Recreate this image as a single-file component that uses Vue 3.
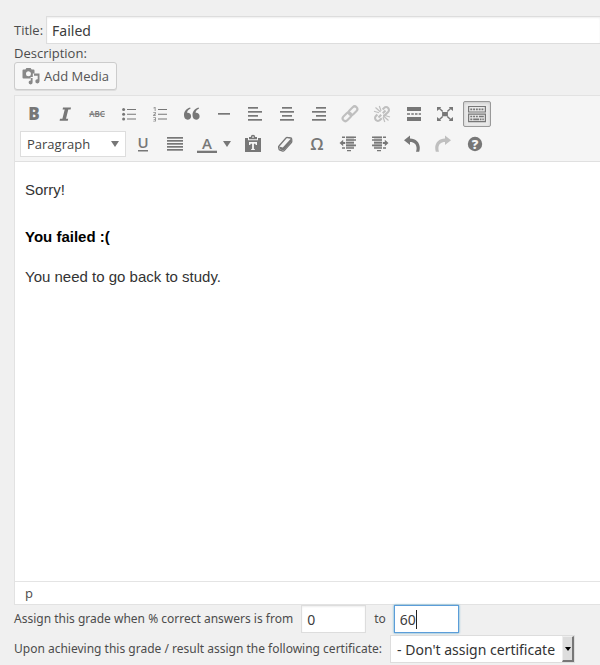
<script setup>
import { ref } from 'vue'

const title = ref('Failed')
const from = ref('0')
const to = ref('60')
const format = ref('Paragraph')
const certificate = ref('none')

const lines = (rows) =>
  rows.map(([x, y, w]) => `<rect x="${x}" y="${y}" width="${w}" height="1.7"/>`).join('')

const glyph = (text, size, y, extra = '') =>
  `<text x="10" y="${y}" text-anchor="middle" font-family="Open Sans, sans-serif" font-size="${size}" ${extra}>${text}</text>`

const indentIcon =
  '<path d="M4 2.600h3v1.500H4zM8 2.600h10v1.500H8zM8 5.200h10v1.600H8zM8 7.900h8v1.600H8zM8 10.600h10v1.600H8zM4 13.300h3v1.500H4zM8 13.300h8v1.500H8zM9 15.900h4v1.300H9z"/><path d="M8 2.600h8v11H8z" opacity=".35"/><path d="m1.500 9 3.700-3.200v2.300h2v1.900h-2v2.300z"/>'

const firstRow = [
  { name: 'Bold', svg: glyph('B', 17, 16, 'font-weight="800"') },
  { name: 'Italic', svg: '<path d="M8 3.500h8l-.4 2h-2.300l-2.300 9.200h2.200l-.4 2H4.600l.4-2h2.400l2.300-9.200H7.600z"/>' },
  { name: 'Strikethrough', svg: glyph('ABC', 8, 13, 'font-weight="600"') + '<path d="M2 9.600h16v1H2z"/>' },
  {
    name: 'Bulleted list',
    svg: '<circle cx="4.600" cy="5.400" r="1.500"/><circle cx="4.600" cy="10.200" r="1.500"/><circle cx="4.600" cy="15" r="1.500"/><path d="M8 5h9v1H8zM8 9.800h9v1H8zM8 14.600h9v1H8z"/>'
  },
  {
    name: 'Numbered list',
    svg: '<path d="M3.500 3.600 5 2.900h.6v4h-.9V4.200l-1.200.4zM3.200 8h2.600v2.200l-1.400 1h1.500v.8H3.100v-.9l1.800-1.500v-.8H3.200zM3.200 13.200h2.700v4.200H3.200v-.7H5v-1H3.700V15H5v-1H3.200z" opacity=".8"/><path d="M8 5h9v1H8zM8 9.800h9v1H8zM8 14.600h9v1H8z"/>'
  },
  {
    name: 'Blockquote',
    svg: '<path d="M8.600 4.600C6 5.800 5.200 7.300 5.100 8.900c2.200-.3 4 1 4 3.300 0 2-1.500 3.500-3.500 3.500-2.200 0-3.600-1.700-3.600-4.400 0-3.700 2-6.600 6.100-7.700zM17.100 4.600c-2.600 1.200-3.400 2.700-3.500 4.300 2.200-.3 4 1 4 3.300 0 2-1.500 3.500-3.500 3.500-2.200 0-3.600-1.700-3.600-4.400 0-3.700 2-6.600 6.100-7.700z"/>'
  },
  { name: 'Horizontal line', svg: '<path d="M4 9h12v1.700H4z"/>' },
  { name: 'Align left', svg: lines([[3, 3, 10], [3, 7, 14], [3, 11, 10], [3, 15, 14]]) },
  { name: 'Align center', svg: lines([[5, 3, 10], [3, 7, 14], [5, 11, 10], [3, 15, 14]]) },
  { name: 'Align right', svg: lines([[7, 3, 10], [3, 7, 14], [7, 11, 10], [3, 15, 14]]) },
  {
    name: 'Insert link',
    dim: true,
    svg: '<g fill="none" stroke="currentColor" stroke-width="2.100"><rect x="-5" y="-2.700" width="10" height="5.400" rx="2.700" transform="translate(13 6.700) rotate(-45)"/><rect x="-5" y="-2.700" width="10" height="5.400" rx="2.700" transform="translate(7 12.800) rotate(-45)"/></g>'
  },
  {
    name: 'Remove link',
    dim: true,
    svg: '<g fill="none" stroke="currentColor" stroke-width="2.100"><path d="m10.600 5.400 1.500-1.500a2.800 2.800 0 0 1 4 0 2.800 2.800 0 0 1 0 4L13 11a2.800 2.800 0 0 1-2 .8M10.800 9.200l2.700-2.700M5.400 10.600 3.900 12.100a2.800 2.800 0 0 0 0 4 2.800 2.800 0 0 0 4 0L9.800 14.200M9.200 10.800l-2.700 2.700"/></g><path d="M3.500 3.500 8.500 8M7.300 2l1.800 5M2 7.300l5 1.500M11.500 12l5 4.500M11 13l1.800 5M13 11.500l5 1.500" stroke="currentColor" stroke-width="1.200"/>'
  },
  { name: 'Insert Read More tag', svg: '<path d="M3 3h14v4H3zM3 9.200h3v1.600H3zM7.300 9.200h2.500v1.600H7.300zM11 9.200h2.500v1.600H11zM14.700 9.200H17v1.600h-2.300zM3 13h14v4H3z"/>' },
  {
    name: 'Fullscreen',
    svg: '<path d="M7.100 8h5.800v4.200H7.100zM2 3h4.200L5.200 4.200l3 2.800-1 1-3-2.800L2 7zM18 3h-4.200l1 1.200-3 2.800 1 1 3-2.800L18 7zM2 17h4.200l-1-1.200 3-2.800-1-1-3 2.800L2 13zM18 17h-4.200l1-1.200-3-2.800 1-1 3 2.800L18 13z"/>'
  },
  {
    name: 'Toolbar toggle',
    active: true,
    svg: '<path fill-rule="evenodd" d="M1 2h18v6.600H1zm1.200 1.100v4.400h15.600V3.100zM1 9.600h18v8.600H1zm1.200 1.100v6.400h15.600v-6.400z"/><g stroke="currentColor" stroke-width="1.700"><path d="M3.300 5.300h13.500" stroke-dasharray="1.900 .9"/><path d="M3.300 12.500h8.500" stroke-dasharray="1.900 .9"/><path d="M12 12.500h4.800M3.300 15.300h2M6.200 15.300h6M13 15.300h1.500M15.300 15.300h1.500"/></g>'
  }
]

const secondRow = [
  { name: 'Underline', svg: glyph('U', 15, 14, 'font-weight="600"') + '<path d="M5 16h10v1.500H5z"/>' },
  { name: 'Justify', svg: lines([[2, 3, 16], [2, 6, 16], [2, 9, 16], [2, 12, 16], [2, 15, 16]]) },
  {
    name: 'Text color',
    split: true,
    svg: glyph('A', 15, 15, 'font-weight="600"') + '<path d="M0 16.700h20v2.300H0z"/>'
  },
  {
    name: 'Paste as text',
    svg: '<path fill-rule="evenodd" d="M2 4h3v2.300h10V4h3v14H2zm4 4v3h1.200l.5-1.300h1.400v5.100l-1 .4v.8h3.800v-.8l-1-.4V9.700h1.400l.5 1.300H14V8z"/><path d="M6 5.300V3h1.800a2.200 2.200 0 0 1 4.400 0H14v2.300z"/><path d="M9.200 2.600h1.600v1.200H9.200z" fill="#f5f5f5"/>'
  },
  {
    name: 'Clear formatting',
    svg: '<path d="m4 12 7-8c.4-.4.9-.6 1.400-.5l3.300.5c.6.1 1 .6 1 1.200l.1 2.300c0 .4-.1.800-.4 1.100l-7.200 8c-.4.400-.9.600-1.400.500l-2.900-.9c-.5-.1-.8-.5-.9-1l-.4-2c-.1-.4.1-.9.400-1.200z" fill="none" stroke="currentColor" stroke-width="1.300"/><path d="m4 12.400 3.800 1.100 8-8.700.7 2.900-7.700 8.900-3.600-1z"/>'
  },
  { name: 'Special character', svg: glyph('Ω', 17, 16, 'font-weight="600"') },
  { name: 'Decrease indent', svg: indentIcon },
  { name: 'Increase indent', svg: `<g transform="matrix(-1 0 0 1 20 0)">${indentIcon}</g>` },
  {
    name: 'Undo',
    svg: '<path d="M2 6.200 8 1.500v2.900c5.800 0 9.800 4.100 9.800 9.400 0 1.400-.2 2.700-.6 3.900h-3.200c.4-1.100.6-2.200.6-3.400 0-4-2.500-6.300-6.600-6.300v3z"/>'
  },
  {
    name: 'Redo',
    dim: true,
    svg: '<path d="M18 6.200 12 1.500v2.900c-5.800 0-9.800 4.100-9.800 9.400 0 1.400.2 2.700.6 3.900H6c-.4-1.100-.6-2.200-.6-3.400 0-4 2.500-6.300 6.600-6.300v3z"/>'
  },
  {
    name: 'Keyboard shortcuts',
    svg: '<circle cx="10" cy="10" r="7.200"/><text x="10" y="14.600" text-anchor="middle" font-family="Open Sans, sans-serif" font-size="13" font-weight="800" fill="#f5f5f5">?</text>'
  }
]
</script>

<template>
  <form class="grade" @submit.prevent>
    <div class="title-row">
      <label for="title">Title:</label>
      <input id="title" v-model="title" class="field title-input" type="text" />
    </div>

    <div id="description-label" class="description">Description:</div>
    <button class="media" type="button">
      <svg class="media-icon" viewBox="0 0 18 18" aria-hidden="true">
        <path
          fill-rule="evenodd"
          d="M1.400 2.500h2L4.400 1h4.200l1 1.500h2c.5 0 .9.400.9.900V6.500h-1.700v3.500H8.600v1.500H1.400c-.5 0-.9-.4-.9-.9V3.400c0-.5.400-.9.900-.9zM6.500 4.300a2.500 2.500 0 1 0 0 5 2.500 2.500 0 0 0 0-5z"
        />
        <path d="M12 6.500h5.500v7.800a2.100 2.100 0 1 1-1.800-2.100V8.800H12zM8.800 11h1.800v4.200a2 2 0 1 1-1.800-1.800z" />
      </svg>
      <span>Add Media</span>
    </button>

    <section class="editor">
      <div class="toolbar" role="toolbar" aria-label="Formatting">
        <div class="tools tools-first">
          <button
            v-for="tool in firstRow"
            :key="tool.name"
            type="button"
            class="tool"
            :class="{ dim: tool.dim, active: tool.active }"
            :aria-label="tool.name"
          >
            <svg class="icon" viewBox="0 0 20 20" v-html="tool.svg"></svg>
          </button>
        </div>
        <div class="tools tools-second">
          <div class="format">
            <select v-model="format" class="format-select" aria-label="Format">
              <option>Paragraph</option>
              <option>Heading 1</option>
              <option>Heading 2</option>
            </select>
          </div>
          <button
            v-for="tool in secondRow"
            :key="tool.name"
            type="button"
            class="tool"
            :class="{ dim: tool.dim, split: tool.split }"
            :aria-label="tool.name"
          >
            <svg class="icon" viewBox="0 0 20 20" v-html="tool.svg"></svg>
          </button>
        </div>
      </div>

      <div class="content" contenteditable="true" role="textbox" aria-multiline="true" aria-labelledby="description-label">
        <p>Sorry!</p>
        <h4>You failed :(</h4>
        <p>You need to go back to study.</p>
      </div>
      <div class="status">p</div>
    </section>

    <div class="range-row">
      <label for="from">Assign this grade when % correct answers is from</label>
      <input id="from" v-model="from" class="field number" type="text" />
      <label for="to">to</label>
      <span class="focused">
        <input id="to" v-model="to" class="field number" type="text" />
      </span>
    </div>

    <div class="certificate-row">
      <label for="certificate">Upon achieving this grade / result assign the following certificate:</label>
      <span class="certificate">
        <select id="certificate" v-model="certificate" class="certificate-select">
          <option value="none">- Don't assign certificate</option>
        </select>
      </span>
    </div>
  </form>
</template>

<style>
body {
  background: #f0f0f0;
  overflow-x: hidden;
}
</style>

<style scoped>
.grade {
  padding: 16px 0 0 14px;
  font-family: 'Open Sans', sans-serif;
  font-size: 13px;
  line-height: 18px;
  color: #4c4c4c;
}

.title-row,
.range-row,
.certificate-row {
  display: flex;
  align-items: center;
  white-space: nowrap;
}

.title-row {
  gap: 3px;
}

.range-row,
.certificate-row {
  gap: 8px;
  font-family: 'Noto Sans', 'Open Sans', sans-serif;
  font-size: 12px;
  line-height: 20px;
}

.field {
  box-sizing: border-box;
  height: 28px;
  margin: 0;
  padding: 0 5px;
  border: 1px solid #ddd;
  background: #fff;
  box-shadow: inset 0 1px 2px rgba(0, 0, 0, 0.07);
  color: #3c3c3c;
  font-family: 'Noto Sans', 'Open Sans', sans-serif;
  font-size: 14px;
}

.title-input {
  flex: 1;
  min-width: 0;
  border-right: 0;
}

.description {
  height: 18px;
}

.media {
  display: flex;
  align-items: center;
  gap: 4px;
  box-sizing: border-box;
  height: 28px;
  margin: 0 0 5px;
  padding: 0 7px;
  border: 1px solid #ccc;
  border-radius: 3px;
  background: #f7f7f7;
  box-shadow: 0 1px 0 rgba(0, 0, 0, 0.08);
  color: #555;
  font-family: inherit;
  font-size: 13px;
}

.media-icon {
  width: 18px;
  height: 18px;
  fill: #888;
}

.editor {
  border: 1px solid #e2e2e2;
  border-right: 0;
  background: #fff;
}

.toolbar {
  padding: 3px 3px 2px;
  border-bottom: 1px solid #e0e0e0;
  background: #f5f5f5;
}

.tools {
  display: grid;
  height: 30px;
  align-items: center;
}

.tools-first {
  width: 475px;
  grid-template-columns: repeat(15, 1fr);
}

.tools-second {
  width: 473px;
  grid-template-columns: 109px 1fr 1fr 47px repeat(8, 1fr);
}

.tool {
  display: flex;
  align-items: center;
  justify-content: center;
  justify-self: center;
  box-sizing: border-box;
  width: 28px;
  height: 26px;
  padding: 0;
  border: 1px solid transparent;
  border-radius: 2px;
  background: none;
  color: #777;
}

.tool.dim {
  color: #bfbfbf;
}

.tool.active {
  border-color: #999;
  background: #e9e9e9;
  box-shadow: inset 0 1px 3px rgba(0, 0, 0, 0.15);
}

.tool.split {
  gap: 6px;
  width: 47px;
}

.tool.split::after {
  content: '';
  border: 4px solid transparent;
  border-top: 6px solid #777;
  border-bottom: 0;
}

.icon {
  flex: none;
  width: 20px;
  height: 20px;
  overflow: visible;
  fill: currentColor;
}

.format {
  position: relative;
  margin: 0 1px 0 2px;
}

.format-select {
  display: block;
  appearance: none;
  box-sizing: border-box;
  width: 100%;
  height: 26px;
  margin: 0;
  padding: 0 6px;
  border: 1px solid #ddd;
  border-radius: 0;
  background: #fff;
  color: #444;
  font-family: inherit;
  font-size: 13px;
}

.format::after {
  content: '';
  position: absolute;
  top: 10px;
  right: 7px;
  border: 4px solid transparent;
  border-top: 6px solid #777;
  border-bottom: 0;
  pointer-events: none;
}

.content {
  box-sizing: border-box;
  min-height: 419px;
  padding: 16px 10px;
  outline: 0;
  color: #333;
  font-family: 'Liberation Sans', sans-serif;
  font-size: 15px;
  line-height: 24px;
}

.content p {
  margin: 0 0 23px;
}

.content h4 {
  margin: 0 0 16px;
  color: #000;
  font-size: 15px;
}

.status {
  height: 22px;
  padding: 0 10px;
  border-top: 1px solid #e4e4e4;
  line-height: 22px;
}

.number {
  width: 65px;
}

.focused {
  position: relative;
}

.focused .number {
  border-color: #5b9dd9;
  box-shadow: 0 0 2px rgba(30, 140, 190, 0.8);
}

.focused::after {
  content: '';
  position: absolute;
  top: 5px;
  left: 22px;
  width: 1px;
  height: 19px;
  background: #222;
}

.certificate-row {
  margin-top: 2px;
}

.certificate {
  position: relative;
}

.certificate-select {
  display: block;
  appearance: none;
  box-sizing: border-box;
  height: 28px;
  margin: 0;
  padding: 0 19px 0 6px;
  border: 1px solid #ddd;
  border-radius: 0;
  background: #fff;
  color: #333;
  font-family: 'Noto Sans', 'Open Sans', sans-serif;
  font-size: 14px;
}

.certificate::before {
  content: '';
  position: absolute;
  top: 1px;
  right: 1px;
  box-sizing: border-box;
  width: 12px;
  height: 26px;
  border: 1px solid #eee;
  border-right: 2px solid #777;
  border-bottom: 2px solid #777;
  background: #ddd;
  pointer-events: none;
}

.certificate::after {
  content: '';
  position: absolute;
  top: 12px;
  right: 4px;
  border: 3px solid transparent;
  border-top: 4px solid #000;
  border-bottom: 0;
  pointer-events: none;
}
</style>
